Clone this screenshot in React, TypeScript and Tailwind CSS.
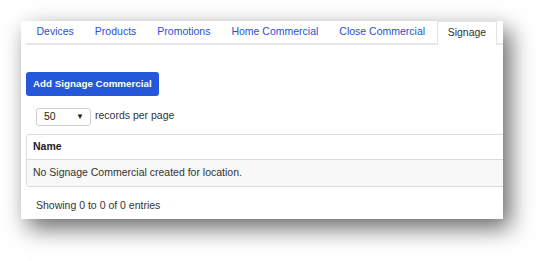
import React from "react";

const tabs = ["Devices", "Products", "Promotions", "Home Commercial", "Close Commercial"];

export default function App() {
  return (
    <div className="w-[545px] h-[261px] bg-white overflow-hidden" style={{ fontFamily: '"Liberation Sans", Arial, sans-serif' }}>
      <div className="ml-[21px] mt-[21px] w-[482px] h-[198px] bg-white overflow-hidden shadow-[7px_9px_22px_rgba(0,0,0,0.6)]">
        <div className="ml-[5px] w-[520px] flex border-b-2 border-[#e8e8e8] h-[24px]">
          {tabs.map((t) => (
            <div key={t} className="px-[10.5px] h-[22px] flex items-center text-[10.5px] text-[#2b4fd2] whitespace-nowrap">
              {t}
            </div>
          ))}
          <div className="ml-[1px] px-[10px] h-[24px] -mb-[2px] flex items-center pb-[2px] text-[10.5px] text-[#333] bg-white border-x border-t border-[#e3e3e3] whitespace-nowrap">
            Signage
          </div>
        </div>
        <div className="ml-[5px] mt-[25px]">
          <button className="h-[24px] px-[7px] rounded-[3px] bg-[#2457d9] text-white font-bold text-[9.8px] whitespace-nowrap">
            Add Signage Commercial
          </button>
        </div>
        <div className="ml-[15px] mt-[12px] flex items-center">
          <div className="w-[55px] h-[18px] border border-[#cfcfcf] rounded-[3px] flex items-center justify-between pl-[7px] pr-[6px] text-[10.5px] text-[#222]">
            <span>50</span>
            <span className="text-[8px] text-[#222]">▼</span>
          </div>
          <span className="ml-[4px] text-[10.5px] text-[#333] -mt-[3px]">records per page</span>
        </div>
        <div className="ml-[5px] mt-[8px] w-[500px] border border-[#dcdcdc] rounded-[3px] overflow-hidden">
          <div className="h-[25px] flex items-center px-[6px] font-bold text-[10.5px] text-[#222] border-b border-[#dcdcdc]">
            Name
          </div>
          <div className="h-[26px] flex items-center px-[6px] text-[10.5px] text-[#333] bg-[#f8f8f8]">
            No Signage Commercial created for location.
          </div>
        </div>
        <div className="ml-[15px] mt-[11px] text-[10.5px] text-[#333]">Showing 0 to 0 of 0 entries</div>
      </div>
    </div>
  );
}
